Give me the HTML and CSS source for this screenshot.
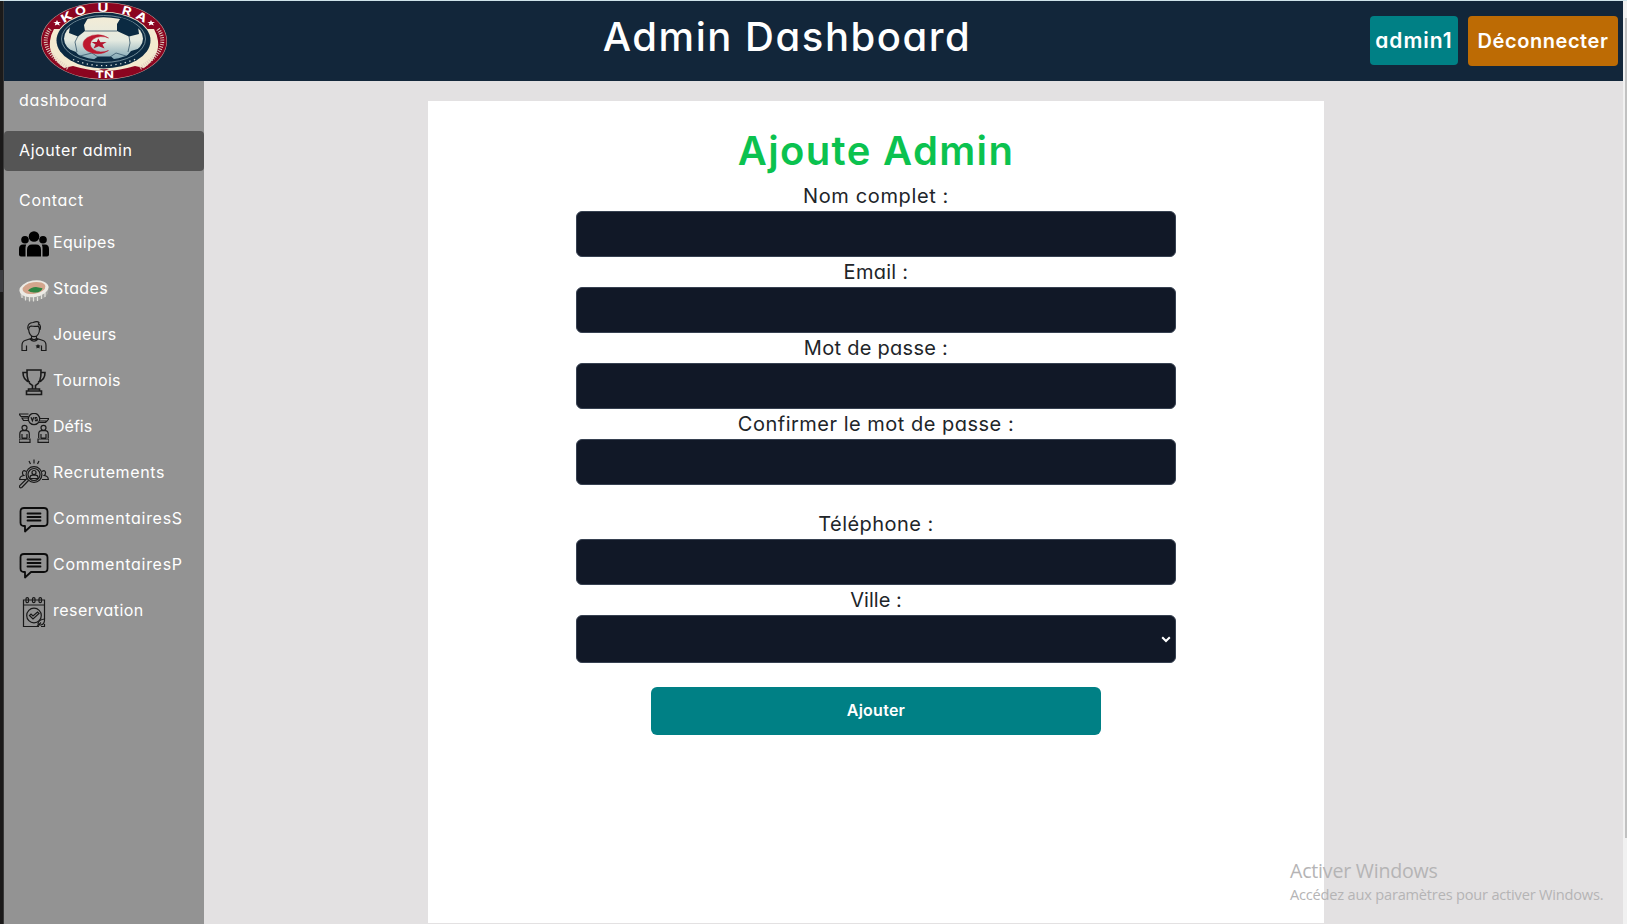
FILE: index.html
```html
<!DOCTYPE html>
<html lang="fr">
<head>
<meta charset="utf-8">
<title>Admin Dashboard</title>
<link rel="stylesheet" href="styles.css">
</head>
<body>
<div class="window">
  <div class="edge"><div class="edge-mark"></div></div>
  <div class="app">
    <header class="header">
      <svg class="logo" viewBox="39 1 130 80" width="130" height="80">
        <defs>
          <linearGradient id="ball" x1="0" y1="0" x2="0" y2="1">
            <stop offset="0" stop-color="#f3ecd6"/><stop offset=".55" stop-color="#e3e9e0"/><stop offset="1" stop-color="#7fa6b5"/>
          </linearGradient>
        </defs>
        <ellipse cx="104" cy="41" rx="63" ry="38.700" fill="#c8a9a0"/>
        <ellipse cx="104" cy="41" rx="62.500" ry="38.200" fill="#8b0520"/>
        <path d="M54 29 L62 29 Q54 48 76 62 L109 69 L104 71 Q90 71 73 66 L64 68 Q48 56 50 41 Q51 34 54 29Z M154 29 L146 29 Q154 48 132 62 L99 69 L104 71 Q118 71 135 66 L144 68 Q160 56 158 41 Q157 34 154 29Z" fill="#f3ead0"/>
        <path d="M50 29 Q36 48 68 68 M158 29 Q172 48 140 68" fill="none" stroke="#e0cfc0" stroke-width="4" stroke-dasharray="1 1.300"/>
        <ellipse cx="103.500" cy="40.500" rx="48" ry="28.800" fill="#f3ead0"/>
        <ellipse cx="103.500" cy="40.500" rx="47" ry="28" fill="#0b2a42"/>
        <ellipse cx="103.500" cy="39" rx="42" ry="23.500" fill="none" stroke="#8ba5ad" stroke-width=".8"/>
        <ellipse cx="103.500" cy="38.500" rx="39.500" ry="21.300" fill="url(#ball)"/>
        <path d="M69 33 L70 26 Q76 20 88 18 L84 25 L85 31 L78 36.500Z M121 17.500 Q133 21 138 27 L139 34 L129 36.500 L117 31 L117 24Z M66 48 L76 52 L80 57 Q71 55 66 48Z M141 48 L131 51 L126 57 Q136 55 141 48Z M93 60 L98 56.500 H111 L115 60Z" fill="#0b2a42"/>
        <path d="M85 31 H117 M78 36 L75 42 L77 52 M129 36 L130 43 L128 52 M80 56 L92 53 L98 57 M126 56 L116 53 L110 57" fill="none" stroke="#35566a" stroke-width=".8"/>
        <path d="M108.500 38 A14.500 9.500 0 1 0 108.500 50.500 A11.500 7.700 0 1 1 108.500 38Z" fill="#bd182e" stroke="#bd182e" stroke-width=".5"/>
        <path d="M98.200 38.500 L100.500 42.200 L106.500 42 L102.500 44.500 L104.500 48.500 L98.800 46.300 L93.500 48.500 L95.500 44.500 L91.500 42 L96.800 42Z" fill="#b3152e"/>
        <path d="M73 59.500 Q103 72 136 59" fill="none" stroke="#d8dfda" stroke-width="1.300" stroke-dasharray="1.300 3.500"/>
        <path d="M57 20 l1 2 3-.1 -2.200 1.400 1 2.100 -2.600-1 -2.400 1.200 .7-2.300 -2.200-1.300 2.700-.1Z M151 20 l1 2 3-.1 -2.200 1.400 1 2.100 -2.600-1 -2.400 1.200 .7-2.300 -2.200-1.300 2.700-.1Z" fill="#fff"/>
        <g class="logo-text">
          <text transform="translate(66.500 17) rotate(-30) scale(1.350 1)" y="4">K</text>
          <text transform="translate(80.500 10.800) rotate(-16) scale(1.250 1)" y="4">O</text>
          <text transform="translate(103 7.500) scale(1.300 1)" y="4">U</text>
          <text transform="translate(127 11) rotate(16) scale(1.250 1)" y="4">R</text>
          <text transform="translate(141.500 16.800) rotate(28) scale(1.300 1)" y="4">A</text>
          <text class="logo-tn" transform="translate(104.500 74.700) scale(1.450 1)" y="3.200">TN</text>
        </g>
      </svg>
      <h1 class="title">Admin Dashboard</h1>
      <div class="actions">
        <a class="user">admin1</a>
        <a class="logout">Déconnecter</a>
      </div>
    </header>
    <div class="body">
      <nav class="sidebar">
        <a class="link"><span class="t-dash">dashboard</span></a>
        <a class="link active"><span class="t-add">Ajouter admin</span></a>
        <a class="link"><span class="t-contact">Contact</span></a>
        <a class="item">
          <svg class="icon" viewBox="0 0 30 30"><g><circle cx="15" cy="7.500" r="5.300"/><circle cx="6" cy="10.700" r="3.800"/><circle cx="24" cy="10.700" r="3.800"/><path d="M8 27.500V21q0-5.500 5-5.500h4q5 0 5 5.500v6.500zM0 25.500V20q0-4.500 4-4.500h3.200Q6.500 17 6.500 19v8.500H2q-2 0-2-2zM30 25.500V20q0-4.500-4-4.500h-3.200q.7 1.500.7 3.500v8.500H28q2 0 2-2z"/></g></svg>
          <span class="t-equipes">Equipes</span></a>
        <a class="item">
          <svg class="icon" viewBox="0 0 30 30"><path d="M1 17v4l4 3 5 1.500h9l7-3 3-4 1-7z" fill="#a3a4a0"/><path d="M3 19v4M6.500 21v4.500M10.500 22v4.500M14.500 22v4.500M18.500 22v4M22.500 20v4M26 18v4" stroke="#e2e2dc" stroke-width="1.200"/><ellipse cx="15" cy="13.800" rx="14.700" ry="8.300" transform="rotate(-9 15 13.800)" fill="#eceae4"/><ellipse cx="15" cy="13" rx="11.500" ry="5.900" transform="rotate(-9 15 13)" fill="#d3a58c"/><path d="M9 15.500q3-3.500 8-3.500l6.500 1.200q-1 4-7 4.300-5 .5-7.500-2z" fill="#2f8542"/></svg>
          <span class="t-stades">Stades</span></a>
        <a class="item">
          <svg class="icon line" viewBox="0 0 30 30"><path d="M9 8.500C8 3 11 1.800 14 1.500c2-.8 5-1.200 6 .2l-.5 1.500c2 .5 2.300 3 1.500 5.500M10 7.500q0-2 2-2.500 3 .8 7.500.2L20.500 8c0 5-2.500 7.700-5.500 7.700S10 12.500 9.500 8M12.500 15v2.500q2.500 2.500 5 0V15M12 17.500l-6 2q-3 1-3 5v5h4.500v-5M18 17.500l6 2q3 1 3 5v5h-4.500v-5M11 18q4 4.500 8 0M7.500 27.500v2M22.500 27.500v2"/><path class="solid" d="M19 23l.8 1.300 1.700.3-1.100 1.200 .2 1.700-1.600-.8-1.600.8.200-1.700-1.100-1.200 1.700-.3z"/></svg>
          <span class="t-joueurs">Joueurs</span></a>
        <a class="item">
          <svg class="icon line cup" viewBox="0 0 30 30"><path d="M8 3h14q.5 13-5.500 15.500V22h-3v-3.500Q7.500 16 8 3zM8 5.500H4q0 8 7 9.500M22 5.500h4q0 8-7 9.500M9.500 22h11v2h-11zM7.500 24h15v3.500h-15z"/></svg>
          <span class="t-tournois">Tournois</span></a>
        <a class="item">
          <svg class="icon line" viewBox="0 0 30 30"><circle cx="15" cy="6" r="5.700"/><path d="M12 4.300l1.400 3.500 1.300-3.500M18.200 4.500h-2v1.500h2v1.700h-2.300M9.500 1H0l2 2.500h7M9.300 5H3l1.500 2.500H10M20.500 5.500H30L28 8h-7M19.500 9.500h7L28 8"/><circle cx="5.500" cy="14.800" r="2.500"/><circle cx="24.500" cy="14.800" r="2.500"/><path d="M.8 25v-4q0-3.300 3-3.300h3.500q3 0 3 3.300v4M19.700 25v-4q0-3.300 3-3.300h3.500q3 0 3 3.300v4M3 25v-4M8 25v-4M22 25v-4M27 25v-4M0 26h11v3.300H0zM19 26h11v3.300H19zM3 25h5M22 25h5"/></svg>
          <span class="t-defis">Défis</span></a>
        <a class="item">
          <svg class="icon line" viewBox="0 0 30 30"><circle cx="15" cy="15.500" r="7.900"/><circle cx="15" cy="15.500" r="6"/><circle cx="15" cy="13.500" r="2"/><path d="M11 19.500v-1q0-2.300 2.500-2.300h3q2.500 0 2.500 2.300v1zM9.500 21.500L2.800 28.500q-1.300.7-2-.2-.8-1 .2-2l7-6.800M15 .5v4M10 2l1.500 3M20 2l-1.500 3M7 12.500q-3-2-3.500 1-.2 2 1.300 3Q.7 17 .7 20.500h6M23 12.500q3-2 3.500 1 .2 2-1.300 3 4.100.5 4.100 4H23"/></svg>
          <span class="t-recr">Recrutements</span></a>
        <a class="item">
          <svg class="icon chat" viewBox="0 0 30 30"><path d="M5 3h20q3.500 0 3.500 3.500v11q0 3.500-3.500 3.500H12l-6 5.500V21H5q-3.500 0-3.500-3.500v-11Q1.500 3 5 3zM8.500 8.500h13M8.500 12h13M8.500 15.500h13"/></svg>
          <span class="t-com">CommentairesS</span></a>
        <a class="item">
          <svg class="icon chat" viewBox="0 0 30 30"><path d="M5 3h20q3.500 0 3.500 3.500v11q0 3.500-3.500 3.500H12l-6 5.500V21H5q-3.500 0-3.500-3.500v-11Q1.500 3 5 3zM8.500 8.500h13M8.500 12h13M8.500 15.500h13"/></svg>
          <span class="t-com">CommentairesP</span></a>
        <a class="item">
          <svg class="icon line" viewBox="0 0 30 30"><path d="M25.500 22V3H4.500v26.500H20M4.500 8h21M25.500 27v2.500H22"/><rect x="7" y=".6" width="2.500" height="5" rx="1.200"/><rect x="13.500" y=".6" width="2.500" height="5" rx="1.200"/><rect x="20" y=".6" width="2.500" height="5" rx="1.200"/><circle cx="15" cy="18.500" r="7.300"/><path d="M10.500 18.500l3.500 3.500 6-5.500 -1.500-1.500-4.500 4-2-2zM19 27q0-4 6.500-5 .5 5-3.500 6zM18 29.500l4-4"/></svg>
          <span class="t-res">reservation</span></a>
      </nav>
      <main class="main">
        <form class="card">
          <h2 class="heading">Ajoute Admin</h2>
          <label class="label l-nom">Nom complet :</label>
          <div class="field"></div>
          <label class="label l-email">Email :</label>
          <div class="field"></div>
          <label class="label l-mdp">Mot de passe :</label>
          <div class="field"></div>
          <label class="label l-conf">Confirmer le mot de passe :</label>
          <div class="field gap"></div>
          <label class="label l-tel">Téléphone :</label>
          <div class="field"></div>
          <label class="label l-ville">Ville :</label>
          <div class="field select"><svg width="10" height="7" viewBox="0 0 10 7"><path d="M1.200 1.200L5 5l3.800-3.800"/></svg></div>
          <button class="submit" type="button">Ajouter</button>
        </form>
      </main>
    </div>
  </div>
  <div class="scrollbar"><div class="thumb"></div></div>
</div>
<div class="activation">
  <div class="act-title">Activer Windows</div>
  <div class="act-text">Accédez aux paramètres pour activer Windows.</div>
</div>
</body>
</html>
```
FILE: styles.css
```css
* { box-sizing: border-box; }
body {
  margin: 0;
  height: 924px;
  overflow: hidden;
  background: #e3e1e2;
  font-family: Inter, "Open Sans", sans-serif;
  font-feature-settings: "cv11";
  font-size: 16px;
}
.window { display: flex; height: 924px; border-top: 1px solid #cfe3ea; }
.edge { width: 4px; background: #1b1a1a; padding-top: 269px; border-right: 1px solid #383838; }
.edge-mark { width: 3px; height: 22px; background: #3c3c40; }
.app { flex: 1; display: flex; flex-direction: column; }
.header {
  height: 80px;
  background: #12263a;
  display: grid;
  grid-template-columns: 130px 1fr 248px;
  align-items: start;
  padding: 0 5px 0 35px;
}
.logo { display: block; }
.logo-text { font-size: 11.5px; font-weight: 700; fill: #fff; text-anchor: middle; }
.logo-tn { font-size: 9px; }
.title {
  margin: 12px 0 0 35px;
  color: #fff;
  font-size: 40px;
  line-height: 48px;
  font-weight: 500;
  letter-spacing: 1.55px;
  text-align: center;
  white-space: nowrap;
}
.actions { display: flex; gap: 10px; padding-top: 15px; align-items: flex-start; }
.user, .logout {
  color: #fff;
  border-radius: 4px;
  font-size: 20px;
  font-weight: 600;
  text-align: center;
  white-space: nowrap;
}
.user { width: 88px; height: 49px; line-height: 50px; background: #008085; font-size: 21px; letter-spacing: 1px; }
.logout { width: 150px; height: 50px; line-height: 50px; background: #bd6b04; letter-spacing: .56px; }
.body { flex: 1; display: flex; }
.sidebar { width: 200px; background: #939393; color: #fff; }
.link { display: block; height: 40px; line-height: 39px; padding-left: 15px; margin-bottom: 10px; }
.link:nth-child(3) { margin-bottom: 0; }
.active { background: #555; border-radius: 4px; }
.item { display: flex; align-items: center; gap: 4px; height: 46px; padding-left: 15px; line-height: 24px; white-space: nowrap; }
.item span { padding-bottom: 5px; }
.t-dash { letter-spacing: .68px; }
.t-add { letter-spacing: .6px; }
.t-contact { letter-spacing: .7px; }
.t-equipes, .t-joueurs { letter-spacing: .3px; }
.t-stades { letter-spacing: .4px; }
.t-tournois { letter-spacing: .25px; }
.t-recr { letter-spacing: .6px; }
.t-com { letter-spacing: .7px; }
.t-res { letter-spacing: .45px; }
.icon { width: 30px; height: 30px; flex: none; }
.line { fill: none; stroke: #191919; stroke-width: 1.2; }
.line .solid { fill: #191919; stroke: none; }
.cup { stroke-width: 1.6; }
.chat { fill: none; stroke: #0c0c0c; stroke-width: 1.8; stroke-linejoin: round; stroke-linecap: round; }
.main { flex: 1; display: flex; padding: 20px 299px 1px 224px; }
.card {
  flex: 1;
  background: #fff;
  display: flex;
  flex-direction: column;
  align-items: center;
  padding-top: 26px;
}
.heading { margin: 0 0 6px; font-size: 40px; line-height: 48px; font-weight: 600; color: #0bc24f; letter-spacing: 1.35px; }
.label { font-size: 20px; line-height: 30px; height: 30px; color: #212529; }
.l-nom { letter-spacing: .63px; }
.l-email, .l-mdp { letter-spacing: .28px; }
.l-conf { letter-spacing: .5px; }
.l-tel { letter-spacing: .45px; }
.field { width: 600px; height: 46px; background: #111827; border: 1px solid #374151; border-radius: 6px; }
.gap { margin-bottom: 24px; }
.select { height: 48px; display: flex; align-items: center; justify-content: flex-end; padding-right: 4px; }
.select path { fill: none; stroke: #fff; stroke-width: 2; }
.submit {
  width: 450px;
  height: 48px;
  margin-top: 24px;
  padding-bottom: 3px;
  border: 0;
  border-radius: 6px;
  background: #008085;
  color: #fff;
  font: 600 16px Inter, sans-serif;
  letter-spacing: .25px;
}
.scrollbar { width: 4px; background: #f1f1f1; padding: 17px 0 0 2px; }
.thumb { height: 820px; background: #c1c1c1; }
.activation { position: absolute; left: 1290px; top: 857px; color: #b5b4b5; font-family: "Open Sans", "Noto Sans", sans-serif; white-space: nowrap; }
.act-title { font-size: 19.6px; line-height: 28px; letter-spacing: -.22px; }
.act-text { font-size: 14.6px; line-height: 18px; letter-spacing: -.2px; }
```
